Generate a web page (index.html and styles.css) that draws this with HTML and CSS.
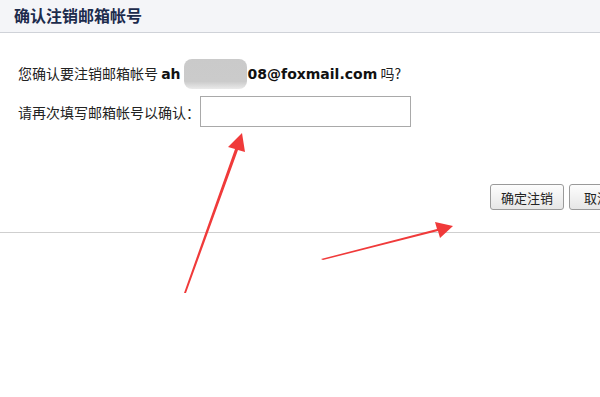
FILE: index.html
```html
<!DOCTYPE html>
<html lang="zh">
<head>
<meta charset="utf-8">
<link rel="stylesheet" href="styles.css">
</head>
<body>
<div class="page">
  <div class="header"><h1 class="title">确认注销邮箱帐号</h1></div>
  <div class="content">
    <p class="line1">您确认要注销邮箱帐号 <b class="addr">ah<span class="blur"></span>08@foxmail.com</b> 吗?</p>
    <div class="line2">
      <span class="label">请再次填写邮箱帐号以确认：</span>
      <input class="field" type="text">
    </div>
    <div class="actions">
      <button class="btn">确定注销</button>
      <button class="btn">取消</button>
    </div>
  </div>
  <div class="lower"></div>
  <svg class="arrows" width="600" height="397" viewBox="0 0 600 397">
    <polygon fill="#f03a3a" points="184,293 235,149 228,147 242,133 245,152 238,150 186,293"/>
    <polygon fill="#f03a3a" points="321,259 437,229 435,222 453,226 440,238 438,231 323,260"/>
  </svg>
</div>
</body>
</html>
```
FILE: styles.css
```css
html, body { margin: 0; padding: 0; background: #fff; }
body { overflow: hidden; width: 600px; height: 397px; }
.page { position: relative; width: 600px; height: 397px; overflow: hidden;
  font-family: "Noto Sans CJK SC", "DejaVu Sans", sans-serif; color: #222; }
.header { height: 32px; background: #f4f5f8; border-bottom: 1px solid #cfd2d8;
  display: flex; align-items: center; padding-left: 14px; }
.title { margin: 0; font-size: 16px; font-weight: bold; color: #1c2b4c; line-height: 1; margin-top: -2px; }
.content { height: 199px; border-bottom: 1px solid #cfcfcf; padding: 0 0 0 18px; display: flex; flex-direction: column; }
.line1 { margin: 26px 0 0 0; font-size: 14px; line-height: 22px; white-space: nowrap; }
.addr { font-family: "DejaVu Sans", sans-serif; font-size: 14px; font-weight: bold; color: #111; }
.blur { display: inline-block; width: 63px; height: 30px; vertical-align: -10px; margin: 0 1px 0 3px;
  border-radius: 8px; background: linear-gradient(to bottom, #cacaca 0%, #cbcbcb 75%, #eaeaea 100%); }
.line2 { display: flex; align-items: center; margin-top: 7px; }
.label { font-size: 14px; width: 182px; white-space: nowrap; }
.field { width: 211px; height: 31px; box-sizing: border-box; border: 1px solid #a9a9a9; margin: 0; padding: 0; background: #fff; }
.actions { display: flex; gap: 5px; margin-top: 57px; padding-left: 472px; }
.btn { height: 26px; box-sizing: border-box; border: 1px solid #9a9a9a; border-radius: 3px;
  background: linear-gradient(to bottom, #fdfdfd, #e6e6e6); font-family: "Noto Sans CJK SC", sans-serif;
  font-size: 13px; color: #222; padding: 0; flex: none; white-space: nowrap; }
.actions .btn:first-child { width: 74px; }
.actions .btn:last-child { width: 56px; }
.arrows { position: absolute; left: 0; top: 0; pointer-events: none; }
```
